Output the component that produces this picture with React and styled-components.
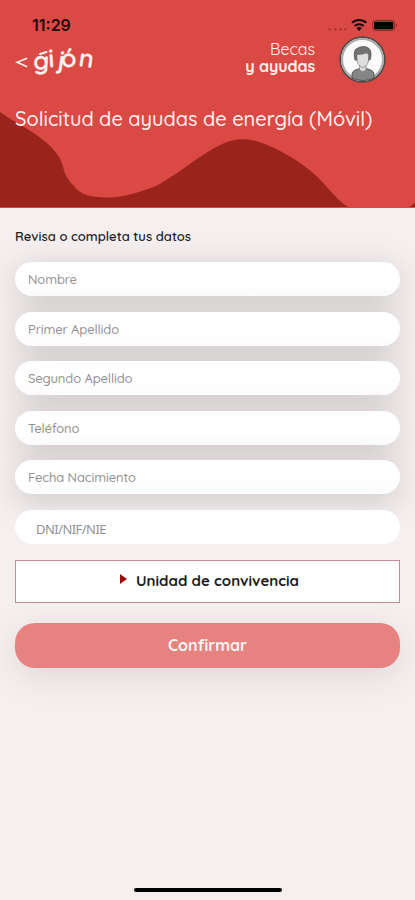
import React from "react";
import styled, { createGlobalStyle } from "styled-components";

const Global = createGlobalStyle`
  * { box-sizing: border-box; }
  body { margin: 0; background: #f5efef; font-family: Quicksand, Lato, "Open Sans", sans-serif; }
`;
const Screen = styled.div`
  width: 415px;
  height: 900px;
  display: flex;
  flex-direction: column;
  background: #f5efef;
  overflow: hidden;
`;
const Header = styled.header`
  position: relative;
  z-index: 1;
  height: 207.5px;
  flex: none;
  background: #db4945;
  color: #fff0ee;
`;
const Wave = styled.svg`
  position: absolute;
  inset: 0;
`;
const HeaderContent = styled.div`
  position: relative;
  display: flex;
  flex-direction: column;
`;
const StatusBar = styled.div`
  height: 36px;
  padding: 15px 16px 0 32px;
  display: flex;
  justify-content: space-between;
`;
const Clock = styled.time`
  font: 600 16px/21px Inter, "Liberation Sans", sans-serif;
  color: #240807;
`;
const Brand = styled.div`
  height: 48px;
  padding: 0 29px 0 15px;
  display: flex;
`;
const Service = styled.div`
  margin-left: auto;
  margin-right: 23px;
  padding-top: 5px;
  display: flex;
  flex-direction: column;
  align-items: flex-end;
  font-size: 16px;
  line-height: 17px;
`;
const Light = styled.span`
  height: 17px;
`;
const Strong = styled.strong`
  height: 17px;
  font-weight: 700;
  letter-spacing: -0.1px;
`;
const Title = styled.h1`
  margin: 22px 0 0 15px;
  font-size: 20px;
  line-height: 26px;
  font-weight: 500;
  letter-spacing: -0.02px;
  white-space: nowrap;
`;
const Form = styled.form`
  position: relative;
  z-index: 0;
  padding: 17.5px 15px 0;
  display: flex;
  flex-direction: column;
`;
const Legend = styled.p`
  margin: 0 0 15px;
  height: 22px;
  font-size: 13px;
  line-height: 22px;
  font-weight: 600;
  color: #211e1e;
`;
const Fields = styled.div`
  display: flex;
  flex-direction: column;
  gap: 15.6px;
`;
const Field = styled.div`
  position: relative;
  height: 34px;
  border-radius: 17px;
  background: linear-gradient(#fff 55%, ${(p) => (p.$flat ? "#fff" : "#fbfbfb")});
  &::before {
    content: "";
    position: absolute;
    inset: 0;
    z-index: -1;
    border-radius: inherit;
    box-shadow: ${(p) => (p.$flat ? "none" : "0 7px 34px rgba(0, 0, 0, 0.17)")};
  }
`;
const Input = styled.input`
  width: 100%;
  height: 100%;
  border: 0;
  outline: 0;
  background: none;
  padding: ${(p) => (p.$inset ? "5px 20px 0 21px" : "0 12px 0 13px")};
  font-family: ${(p) => (p.$inset ? '"Noto Sans", sans-serif' : "inherit")};
  font-weight: ${(p) => (p.$inset ? 400 : 500)};
  font-size: 13px;
  letter-spacing: ${(p) => (p.$inset ? "-0.55px" : "-0.13px")};
  &::placeholder { color: #929292; opacity: 1; }
`;
const Household = styled.button`
  margin-top: 16px;
  height: 43px;
  border: 1px solid #c58d94;
  background: #fff;
  display: flex;
  align-items: center;
  justify-content: center;
  gap: 9px;
  padding: 0 0 0 4px;
  font: 700 15px/20px Quicksand, Lato, sans-serif;
  color: #1b1b1b;
`;
const Arrow = styled.svg`
  margin-top: -4px;
`;
const Confirm = styled.button`
  margin-top: 20px;
  height: 45px;
  border: 0;
  border-radius: 20px;
  background: #e6827f;
  box-shadow: 0 8px 36px rgba(0, 0, 0, 0.1);
  color: #fff6f4;
  font: 700 16px/20px Quicksand, Lato, sans-serif;
`;
const HomeIndicator = styled.div`
  width: 148px;
  height: 4.5px;
  margin: auto auto 8px 134px;
  flex: none;
  border-radius: 3px;
  background: #000;
`;

const fields = ["Nombre", "Primer Apellido", "Segundo Apellido", "Teléfono", "Fecha Nacimiento"];

const StatusIcons = () => (
  <svg width="72" height="16" viewBox="327 15 72 16">
    <g fill="#a83231">
      {[330, 336, 341, 346].map((x) => (
        <circle key={x} cx={x - 0.5} cy="29.3" r="1.2" />
      ))}
    </g>
    <g fill="none" stroke="#1b0505" strokeWidth="2">
      <path d="M352 22.8a10.5 10.5 0 0 1 14.4 0" />
      <path d="M354.7 26a6.5 6.5 0 0 1 9 0" />
    </g>
    <path d="M356.4 28.3a4 4 0 0 1 5.6 0l-2.8 2.6z" fill="#1b0505" />
    <rect x="372.6" y="20.4" width="22" height="10" rx="2.5" fill="none" stroke="#8c2927" />
    <rect x="374" y="21.7" width="19.3" height="7.5" rx="1.3" fill="#000" />
    <path d="M396 23.5q2.3 1.8 0 3.8z" fill="#8c2927" />
  </svg>
);

const Logo = () => (
  <svg width="84" height="48" viewBox="15 36 84 48" role="img" aria-label="gijón">
    <path d="M27.2 58.2 17 62.3l10.2 4.4" fill="none" stroke="#fff3ef" strokeWidth="1.7" />
    <text
      x="33 49 57 61.5 78"
      y="69 67.5 68.5 67.5 66"
      rotate="3 -4 8 -4 8"
      fontFamily="Quicksand, Lato, sans-serif"
      fontWeight="600"
      fontSize="25"
      fill="#fff3ef"
      stroke="#fff3ef"
      strokeWidth=".3"
    >
      gijón
    </text>
    <path d="m40 54 6.500-2" stroke="#fff3ef" strokeWidth="2" strokeLinecap="round" />
  </svg>
);

const Avatar = () => (
  <svg width="48" height="48" viewBox="338 35 48 48">
    <circle cx="362.5" cy="58.5" r="22.3" fill="#fafafa" stroke="#514a4a" strokeWidth="1.8" />
    <circle cx="362.5" cy="58.5" r="20.5" fill="none" stroke="#aaa8a8" strokeWidth="2" />
    <path d="M352 77v-3q0-4.500 5-5.500l3-1h6l3 1q5 1 5 5.500v3q-11 5-22 0z" fill="#858585" stroke="#555" />
    <path d="M359.500 64v5q3.500 3 6.500 0v-5z" fill="#dcdcdc" stroke="#777" strokeWidth=".6" />
    <path d="M355 59q-2-8 1-11 3-2.500 8-2.500 7 .5 7 7.500 0 3-1 6z" fill="#727272" stroke="#505050" strokeWidth=".8" />
    <path d="M357 53.500q6 0 9-1.500 2 0 2.500 2v6q-1.500 5.500-5.800 6.500-4.200-1-5.700-6.500z" fill="#dfdfdf" stroke="#777" strokeWidth=".7" />
  </svg>
);

export default function App() {
  return (
    <>
      <Global />
      <Screen>
        <Header>
          <Wave width="415" height="207" viewBox="0 0 415 207">
            <path
              fill="#98241c"
              d="M0 112C20 126 47 137 59 157C65 167 62 173 72 184C81 194 84 197 110 197.500C125 197 143 191 156 186C181 173 207 148 230 141C244 137 257 140 272 147C296 158 313 171 327 187C334 195 341 203 348 207H0Z"
            />
            <path fill="#98241c" d="M409 207q3-1 6-5v5z" />
          </Wave>
          <HeaderContent>
            <StatusBar>
              <Clock>11:29</Clock>
              <StatusIcons />
            </StatusBar>
            <Brand>
              <Logo />
              <Service>
                <Light>Becas</Light>
                <Strong>y ayudas</Strong>
              </Service>
              <Avatar />
            </Brand>
            <Title>Solicitud de ayudas de energía (Móvil)</Title>
          </HeaderContent>
        </Header>
        <Form onSubmit={(e) => e.preventDefault()}>
          <Legend>Revisa o completa tus datos</Legend>
          <Fields>
            {fields.map((label) => (
              <Field key={label}>
                <Input placeholder={label} />
              </Field>
            ))}
            <Field $flat>
              <Input placeholder="DNI/NIF/NIE" $inset />
            </Field>
          </Fields>
          <Household type="button">
            <Arrow width="7" height="10" viewBox="0 0 7 10">
              <path d="M0 0 7 5 0 10z" fill="#9c0b0b" />
            </Arrow>
            Unidad de convivencia
          </Household>
          <Confirm>Confirmar</Confirm>
        </Form>
        <HomeIndicator />
      </Screen>
    </>
  );
}
